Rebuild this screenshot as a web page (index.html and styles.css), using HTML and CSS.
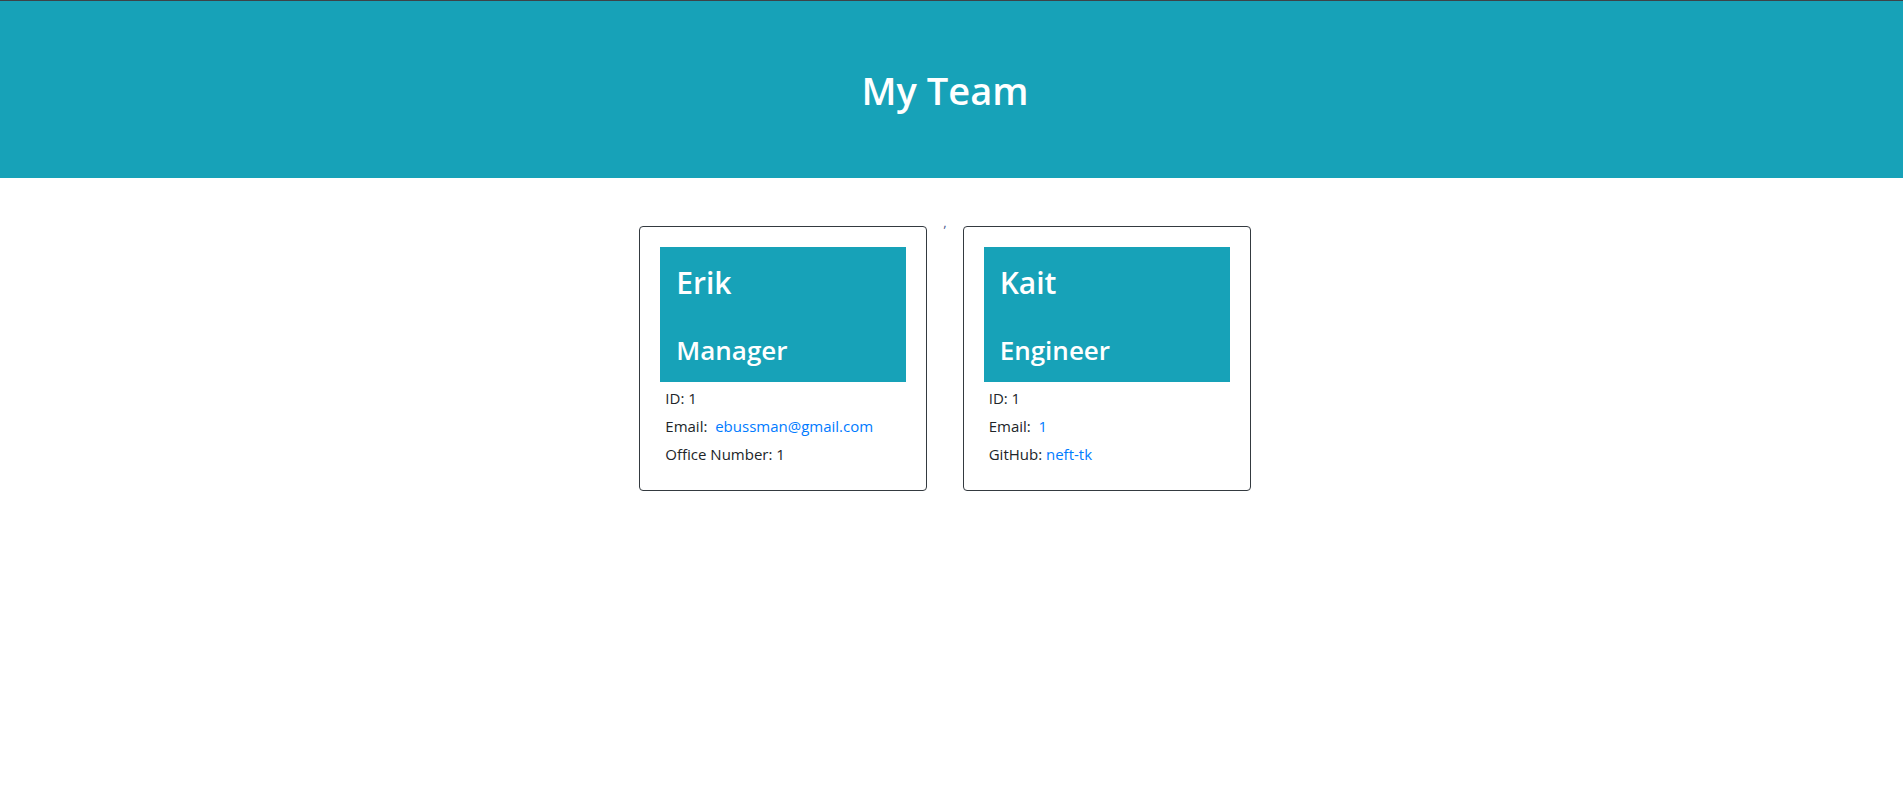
FILE: index.html
```html
<!DOCTYPE html>
<html lang="en">
<head>
<meta charset="UTF-8">
<title>My Team</title>
<link rel="stylesheet" href="styles.css">
</head>
<body>
<header class="hero">
  <h1 class="hero-title">My Team</h1>
</header>
<main class="team"><div class="card">
    <div class="card-head">
      <h2 class="card-name">Erik</h2>
      <h3 class="card-role">Manager</h3>
    </div>
    <ul class="card-info">
      <li>ID: 1</li>
      <li>Email:&nbsp; <a href="#">ebussman@gmail.com</a></li>
      <li>Office Number: 1</li>
    </ul>
  </div>,<div class="card">
    <div class="card-head">
      <h2 class="card-name">Kait</h2>
      <h3 class="card-role">Engineer</h3>
    </div>
    <ul class="card-info">
      <li>ID: 1</li>
      <li>Email:&nbsp; <a href="#">1</a></li>
      <li>GitHub: <a href="#">neft-tk</a></li>
    </ul>
  </div></main>
</body>
</html>
```
FILE: styles.css
```css
* { box-sizing: border-box; }
body {
  margin: 0;
  font-family: "Open Sans", "Noto Sans", sans-serif;
  font-size: 15px;
  color: #212529;
  background: #fff;
}
.hero {
  background: #17a2b8;
  border-top: 1px solid #3d4348;
  height: 178px;
  display: flex;
  align-items: flex-start;
  justify-content: center;
  padding-top: 65px;
  padding-right: 13px;
  margin-bottom: 32px;
}
.hero-title {
  margin: 0;
  color: #fff;
  font-size: 38px;
  font-weight: 600;
  line-height: 48px;
}
.team {
  display: flex;
  justify-content: center;
  align-items: flex-start;
  padding-right: 13px;
  line-height: 24px;
  font-size: 13px;
  color: #4a5a8a;
}
.card {
  width: 288px;
  margin: 16px;
  border: 1px solid #343a40;
  border-radius: 4px;
  padding: 20px 20px 20px;
  color: #212529;
  font-size: 15px;
}
.card-head {
  background: #17a2b8;
  color: #fff;
  height: 135px;
  padding: 17px 16px 0;
}
.card-name {
  margin: 0 0 31px;
  font-size: 30px;
  font-weight: 600;
  line-height: 38px;
}
.card-role {
  margin: 0;
  font-size: 26px;
  font-weight: 600;
  line-height: 34px;
}
.card-info {
  list-style: none;
  margin: 3px 0 0;
  padding: 0 5px;
  line-height: 28px;
  font-size: 15px;
}
.card-info li:first-child {
  margin-top: -1px;
}
.card-info li:last-child {
  margin-bottom: 2px;
}
.card-info a {
  color: #007bff;
  text-decoration: none;
}
```
